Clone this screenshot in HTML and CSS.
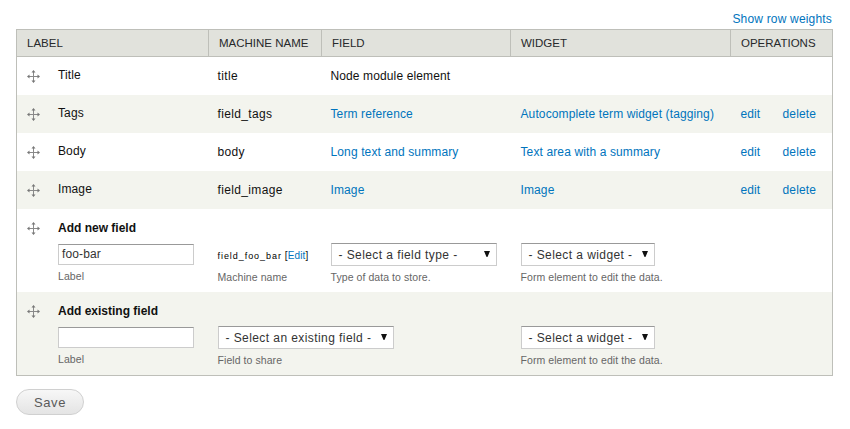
FILE: index.html
```html
<!DOCTYPE html>
<html lang="en">
<head>
<meta charset="utf-8">
<title>Manage fields</title>
<link rel="stylesheet" href="styles.css">
</head>
<body>
<svg class="defs" width="0" height="0" aria-hidden="true">
  <symbol id="drag" viewBox="0 0 13 13">
    <path d="M6.5 1.5v10M1.5 6.5h10" stroke="#8a8a8a" stroke-width="1" fill="none"/>
    <path d="M6.5 0l2 2.5h-4zM6.5 13l2-2.5h-4zM0 6.5l2.5-2v4zM13 6.5l-2.5-2v4z" fill="#777"/>
  </symbol>
  <symbol id="arrow" viewBox="0 0 8 8"><path d="M0 0h8L4.6 8h-1.2z" fill="#111"/></symbol>
</svg>
<div class="toggle"><a href="#">Show row weights</a></div>
<table class="fields">
  <colgroup><col class="c1"><col class="c2"><col class="c3"><col class="c4"><col class="c5"></colgroup>
  <thead>
    <tr><th>LABEL</th><th>MACHINE NAME</th><th>FIELD</th><th>WIDGET</th><th>OPERATIONS</th></tr>
  </thead>
  <tbody>
    <tr class="row">
      <td><div class="lab"><svg class="drag"><use href="#drag"/></svg><span>Title</span></div></td>
      <td>title</td><td>Node module element</td><td></td><td></td>
    </tr>
    <tr class="row even">
      <td><div class="lab"><svg class="drag"><use href="#drag"/></svg><span>Tags</span></div></td>
      <td>field_tags</td><td><a href="#">Term reference</a></td><td><a href="#">Autocomplete term widget (tagging)</a></td>
      <td><div class="ops"><a href="#">edit</a><a href="#">delete</a></div></td>
    </tr>
    <tr class="row">
      <td><div class="lab"><svg class="drag"><use href="#drag"/></svg><span>Body</span></div></td>
      <td>body</td><td><a href="#">Long text and summary</a></td><td><a href="#">Text area with a summary</a></td>
      <td><div class="ops"><a href="#">edit</a><a href="#">delete</a></div></td>
    </tr>
    <tr class="row even">
      <td><div class="lab"><svg class="drag"><use href="#drag"/></svg><span>Image</span></div></td>
      <td>field_image</td><td><a href="#">Image</a></td><td><a href="#">Image</a></td>
      <td><div class="ops"><a href="#">edit</a><a href="#">delete</a></div></td>
    </tr>
    <tr class="add">
      <td>
        <div class="lab"><svg class="drag"><use href="#drag"/></svg><strong>Add new field</strong></div>
        <div class="indent"><div class="input">foo-bar</div><div class="hint">Label</div></div>
      </td>
      <td class="mid">
        <div class="machine"><b>field_foo_bar</b> [<a href="#">Edit</a>]</div>
        <div class="hint">Machine name</div>
      </td>
      <td class="mid">
        <div class="select wide"><span>- Select a field type -</span><svg class="arrow"><use href="#arrow"/></svg></div>
        <div class="hint">Type of data to store.</div>
      </td>
      <td class="wid">
        <div class="select widget"><span>- Select a widget -</span><svg class="arrow"><use href="#arrow"/></svg></div>
        <div class="hint">Form element to edit the data.</div>
      </td>
      <td></td>
    </tr>
    <tr class="add even last">
      <td>
        <div class="lab"><svg class="drag"><use href="#drag"/></svg><strong>Add existing field</strong></div>
        <div class="indent"><div class="input"></div><div class="hint">Label</div></div>
      </td>
      <td class="mid" colspan="2">
        <div class="select existing"><span>- Select an existing field -</span><svg class="arrow"><use href="#arrow"/></svg></div>
        <div class="hint">Field to share</div>
      </td>
      <td class="wid">
        <div class="select widget"><span>- Select a widget -</span><svg class="arrow"><use href="#arrow"/></svg></div>
        <div class="hint">Form element to edit the data.</div>
      </td>
      <td></td>
    </tr>
  </tbody>
</table>
<button class="save" type="button">Save</button>
</body>
</html>
```
FILE: styles.css
```css
html, body { margin: 0; padding: 0; background: #fff; }
body {
  padding: 0 18px 0 16px;
  font-family: "Liberation Sans", Arial, sans-serif;
  font-size: 12px;
  letter-spacing: .12px;
  color: #111;
  overflow: hidden;
}
a { color: #0074bd; text-decoration: none; }
.defs { position: absolute; }
.toggle { height: 29px; box-sizing: border-box; padding-top: 12px; line-height: 14px; text-align: right; letter-spacing: .18px; }
.fields {
  width: 816px;
  table-layout: fixed;
  border-collapse: collapse;
  border: 1px solid #bebfb9;
}
.c1 { width: 192px; } .c2 { width: 113px; } .c3 { width: 189px; } .c4 { width: 220px; } .c5 { width: 102px; }
th {
  height: 25px;
  padding: 0 10px 1px;
  background: #e1e2dc;
  border: 1px solid #bebfb9;
  font-size: 11.5px;
  letter-spacing: 0;
  font-weight: normal;
  text-align: left;
  color: #27292b;
  white-space: nowrap;
}
td { padding: 0 10px; vertical-align: top; }
.row td:nth-child(2), .row td:nth-child(3), .mid { padding-left: 9px; }
.row td:nth-child(2) { letter-spacing: .35px; }
.even { background: #f3f4ee; }
.row { height: 38px; }
.row td { vertical-align: middle; }
.row td:first-child { padding-bottom: 1px; }
.lab { display: flex; align-items: flex-start; }
.drag { width: 13px; height: 13px; flex: none; margin-right: 18px; }
.row .lab { align-items: center; }
.row .drag { position: relative; top: 1px; }
.add { height: 83px; }
.last { height: 84px; }
.add td { padding-top: 12px; }
.add strong { letter-spacing: 0; line-height: 14px; }
.add .drag { margin-top: 1px; }
.indent { margin-left: 31px; }
.input {
  box-sizing: border-box;
  width: 136px;
  height: 21px;
  margin-top: 9px;
  padding: 0 3px;
  line-height: 19px;
  background: #fff;
  border: 1px solid #ccc;
  border-top-color: #999;
  color: #333;
}
.machine { height: 23px; line-height: 25px; font-size: 10px; white-space: nowrap; }
.machine b { font-weight: normal; letter-spacing: .95px; font-size: 9px; color: #000; }
.add td.mid, .add td.wid { padding-top: 34px; }
.select {
  box-sizing: border-box;
  display: flex;
  align-items: center;
  justify-content: space-between;
  height: 23px;
  padding: 1px 6px 0 7px;
  background: #fff;
  border: 1px solid #ccc;
  border-top-color: #999;
  color: #333;
  letter-spacing: .42px;
  white-space: nowrap;
}
.wide { width: 166px; }
.widget { width: 134px; }
.existing { width: 176px; }
.arrow { width: 6px; height: 6px; flex: none; margin-top: -2px; }
.hint { margin-top: 4px; font-size: 10.5px; line-height: 14px; color: #666; letter-spacing: .07px; }
.ops { display: flex; justify-content: space-between; padding-right: 6px; }
.save {
  display: block;
  width: 68px;
  height: 26px;
  margin-top: 13px;
  padding: 0;
  font: 13px "Liberation Sans", Arial, sans-serif;
  letter-spacing: .6px;
  color: #5a5a5a;
  background: linear-gradient(#f7f7f7, #e4e4e4);
  border: 1px solid #d0d0d0;
  border-radius: 13px;
}
```
